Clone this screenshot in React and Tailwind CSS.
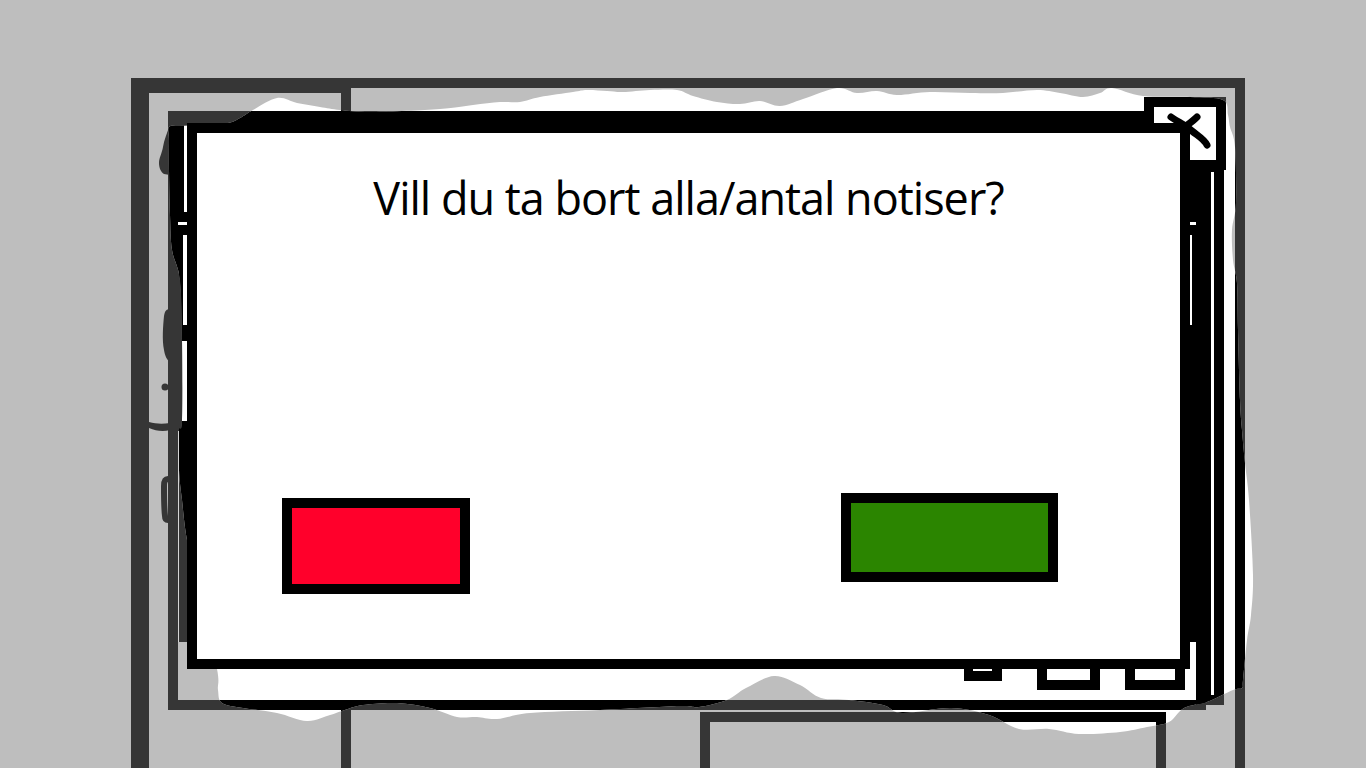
const BLOB_POINTS = [
  [169, 127], [180, 126], [200, 125], [228, 123], [240, 118], [253, 110], [277, 98], [297, 103], [320, 107], [340, 110],
  [373, 112], [440, 109], [473, 105], [500, 102], [520, 102], [540, 97], [573, 92], [587, 90], [607, 91],
  [623, 92], [650, 90], [677, 90], [693, 96], [717, 102], [740, 104], [760, 101], [780, 106], [803, 99],
  [837, 88], [857, 93], [877, 91], [897, 95], [930, 92], [970, 93], [1003, 93], [1037, 90], [1060, 93],
  [1083, 97], [1100, 93], [1112, 88], [1143, 96], [1190, 97], [1223, 100], [1228, 115], [1230, 127],
  [1235, 147], [1236, 203], [1232, 230], [1233, 260], [1237, 283], [1238, 330], [1240, 400], [1242, 430],
  [1245, 463], [1249, 500], [1253, 575], [1251, 615], [1247, 640], [1243, 680], [1242, 688], [1233, 690],
  [1207, 702], [1184, 708], [1169, 722], [1147, 727], [1120, 732], [1079, 734], [1049, 729], [1019, 729],
  [989, 715], [951, 708], [902, 713], [883, 705], [849, 700], [821, 698], [800, 685], [774, 676], [746, 688],
  [727, 700], [699, 707], [680, 706], [600, 710], [530, 713], [497, 719], [477, 717], [457, 717], [430, 708],
  [397, 703], [363, 705], [342, 711], [330, 715], [307, 721], [277, 713], [243, 708], [222, 703], [218, 690], [217, 669],
  [200, 600], [187, 540], [182, 500], [179, 470], [179, 431], [182, 421], [182, 340], [180, 280], [172, 250],
  [170, 215], [169, 170], [169, 140],
];

// catmull-rom through the traced points so the paper edge stays soft
function smoothPath(points) {
  const n = points.length;
  let d = `M${points[0][0]} ${points[0][1]}`;
  for (let i = 0; i < n; i++) {
    const p0 = points[(i - 1 + n) % n];
    const p1 = points[i];
    const p2 = points[(i + 1) % n];
    const p3 = points[(i + 2) % n];
    const c1 = [p1[0] + (p2[0] - p0[0]) / 6, p1[1] + (p2[1] - p0[1]) / 6];
    const c2 = [p2[0] - (p3[0] - p1[0]) / 6, p2[1] - (p3[1] - p1[1]) / 6];
    d += ` C${c1[0]} ${c1[1]} ${c2[0]} ${c2[1]} ${p2[0]} ${p2[1]}`;
  }
  return d + " Z";
}

const BLOB = smoothPath(BLOB_POINTS);

// wireframe lines, painted dark first and again in black inside the paper
function FrameLines({ fill }) {
  return (
    <g fill={fill}>
      <rect x="131" y="78" width="220" height="15" />
      <rect x="351" y="78" width="894" height="10" />
      <rect x="131" y="78" width="18" height="690" />
      <rect x="1235" y="78" width="10" height="690" />
      <rect x="341" y="78" width="10" height="33" />
      <rect x="341" y="710" width="10" height="58" />
      <rect x="168" y="111" width="976" height="12" />
      <rect x="168" y="111" width="10" height="599" />
      <rect x="179" y="123" width="8" height="519" />
      <rect x="178" y="111" width="10" height="320" />
      <rect x="168" y="700" width="1038" height="10" />
      <rect x="1144" y="97" width="82" height="73" />
      <rect x="1196" y="170" width="28" height="535" />
      <rect x="1190" y="170" width="6" height="472" />
      <rect x="700" y="712" width="466" height="10" />
      <rect x="700" y="712" width="10" height="56" />
      <rect x="1156" y="712" width="10" height="56" />
    </g>
  );
}

function SketchBackdrop() {
  return (
    <svg className="absolute inset-0 h-full w-full" viewBox="0 0 1366 768" aria-hidden="true">
      <defs>
        <clipPath id="paper">
          <path d={BLOB} />
        </clipPath>
      </defs>

      <FrameLines fill="#363636" />

      {/* scribbles that stick out on the left */}
      <g fill="#363636">
        <path d="M170 125 C167 133 164 140 163 147 C162 153 159 158 159 163 C159 168 161 172 164 174 L170 175 Z" />
        <path d="M170 309 C166 309 165 311 164 316 C163 326 162 340 164 350 C165 356 167 361 170 361 Z" />
        <circle cx="165" cy="387" r="3.5" />
        <path d="M149 422 C156 424 163 424 170 423 L170 430 C163 432 156 431 149 428 Z" />
      </g>
      <path d="M168 479 C165 479 164 482 164 486 C164 496 164 508 165 516 C165 519 166 520 168 520" fill="none" stroke="#363636" strokeWidth="6" />

      <path d={BLOB} fill="#fff" />
      <g clipPath="url(#paper)">
        <FrameLines fill="#000" />
        <g fill="#fff">
          <rect x="184" y="123" width="3" height="89" />
          <rect x="178" y="222" width="9" height="3" />
          <rect x="183" y="235" width="4" height="90" />
          <rect x="182" y="341" width="5" height="80" />
          <rect x="1190" y="222" width="6" height="3" />
          <rect x="1190" y="235" width="2" height="90" />
          <rect x="1211" y="172" width="3" height="523" />
          <rect x="1190" y="642" width="6" height="58" />
          <rect x="1154" y="107" width="62" height="53" />
        </g>
        {/* bits of the toolbar poking out under the dialog */}
        <g fill="#000">
          <rect x="964" y="660" width="38" height="21" />
          <rect x="1037" y="660" width="63" height="30" />
          <rect x="1125" y="660" width="60" height="30" />
        </g>
        <g fill="#fff">
          <rect x="973" y="669" width="19" height="2" />
          <rect x="1047" y="669" width="43" height="11" />
          <rect x="1135" y="669" width="40" height="11" />
        </g>
      </g>

      <rect x="178" y="431" width="1" height="211" fill="#d4d4d4" />

      {/* close cross */}
      <g fill="none" stroke="#000" strokeWidth="7" strokeLinecap="round">
        <path d="M1171 117 C1178 122 1185 125 1192 131 C1198 136 1204 139 1207 145" />
        <path d="M1197 117 C1192 122 1187 125 1181 130" />
      </g>
    </svg>
  );
}

export default function App() {
  return (
    <div className="relative h-screen w-full overflow-hidden bg-[#bebebe]">
      <SketchBackdrop />

      <div className="absolute left-[187px] top-[123px] flex h-[546px] w-[1003px] flex-col border-[10px] border-black bg-white">
        <h1 className="mt-[32px] flex-1 text-center font-['Open_Sans',sans-serif] text-[45px] leading-[66px] font-normal tracking-[-1px] text-black">
          Vill du ta bort alla/antal notiser?
        </h1>
        <div className="mb-[65px] flex items-start justify-between pl-[85px] pr-[122px]">
          <button className="mt-[5px] h-[96px] w-[188px] border-[10px] border-black bg-[#ff002b]" aria-label="Nej" />
          <button className="h-[89px] w-[217px] border-[10px] border-black bg-[#2b8500]" aria-label="Ja" />
        </div>
      </div>
    </div>
  );
}
